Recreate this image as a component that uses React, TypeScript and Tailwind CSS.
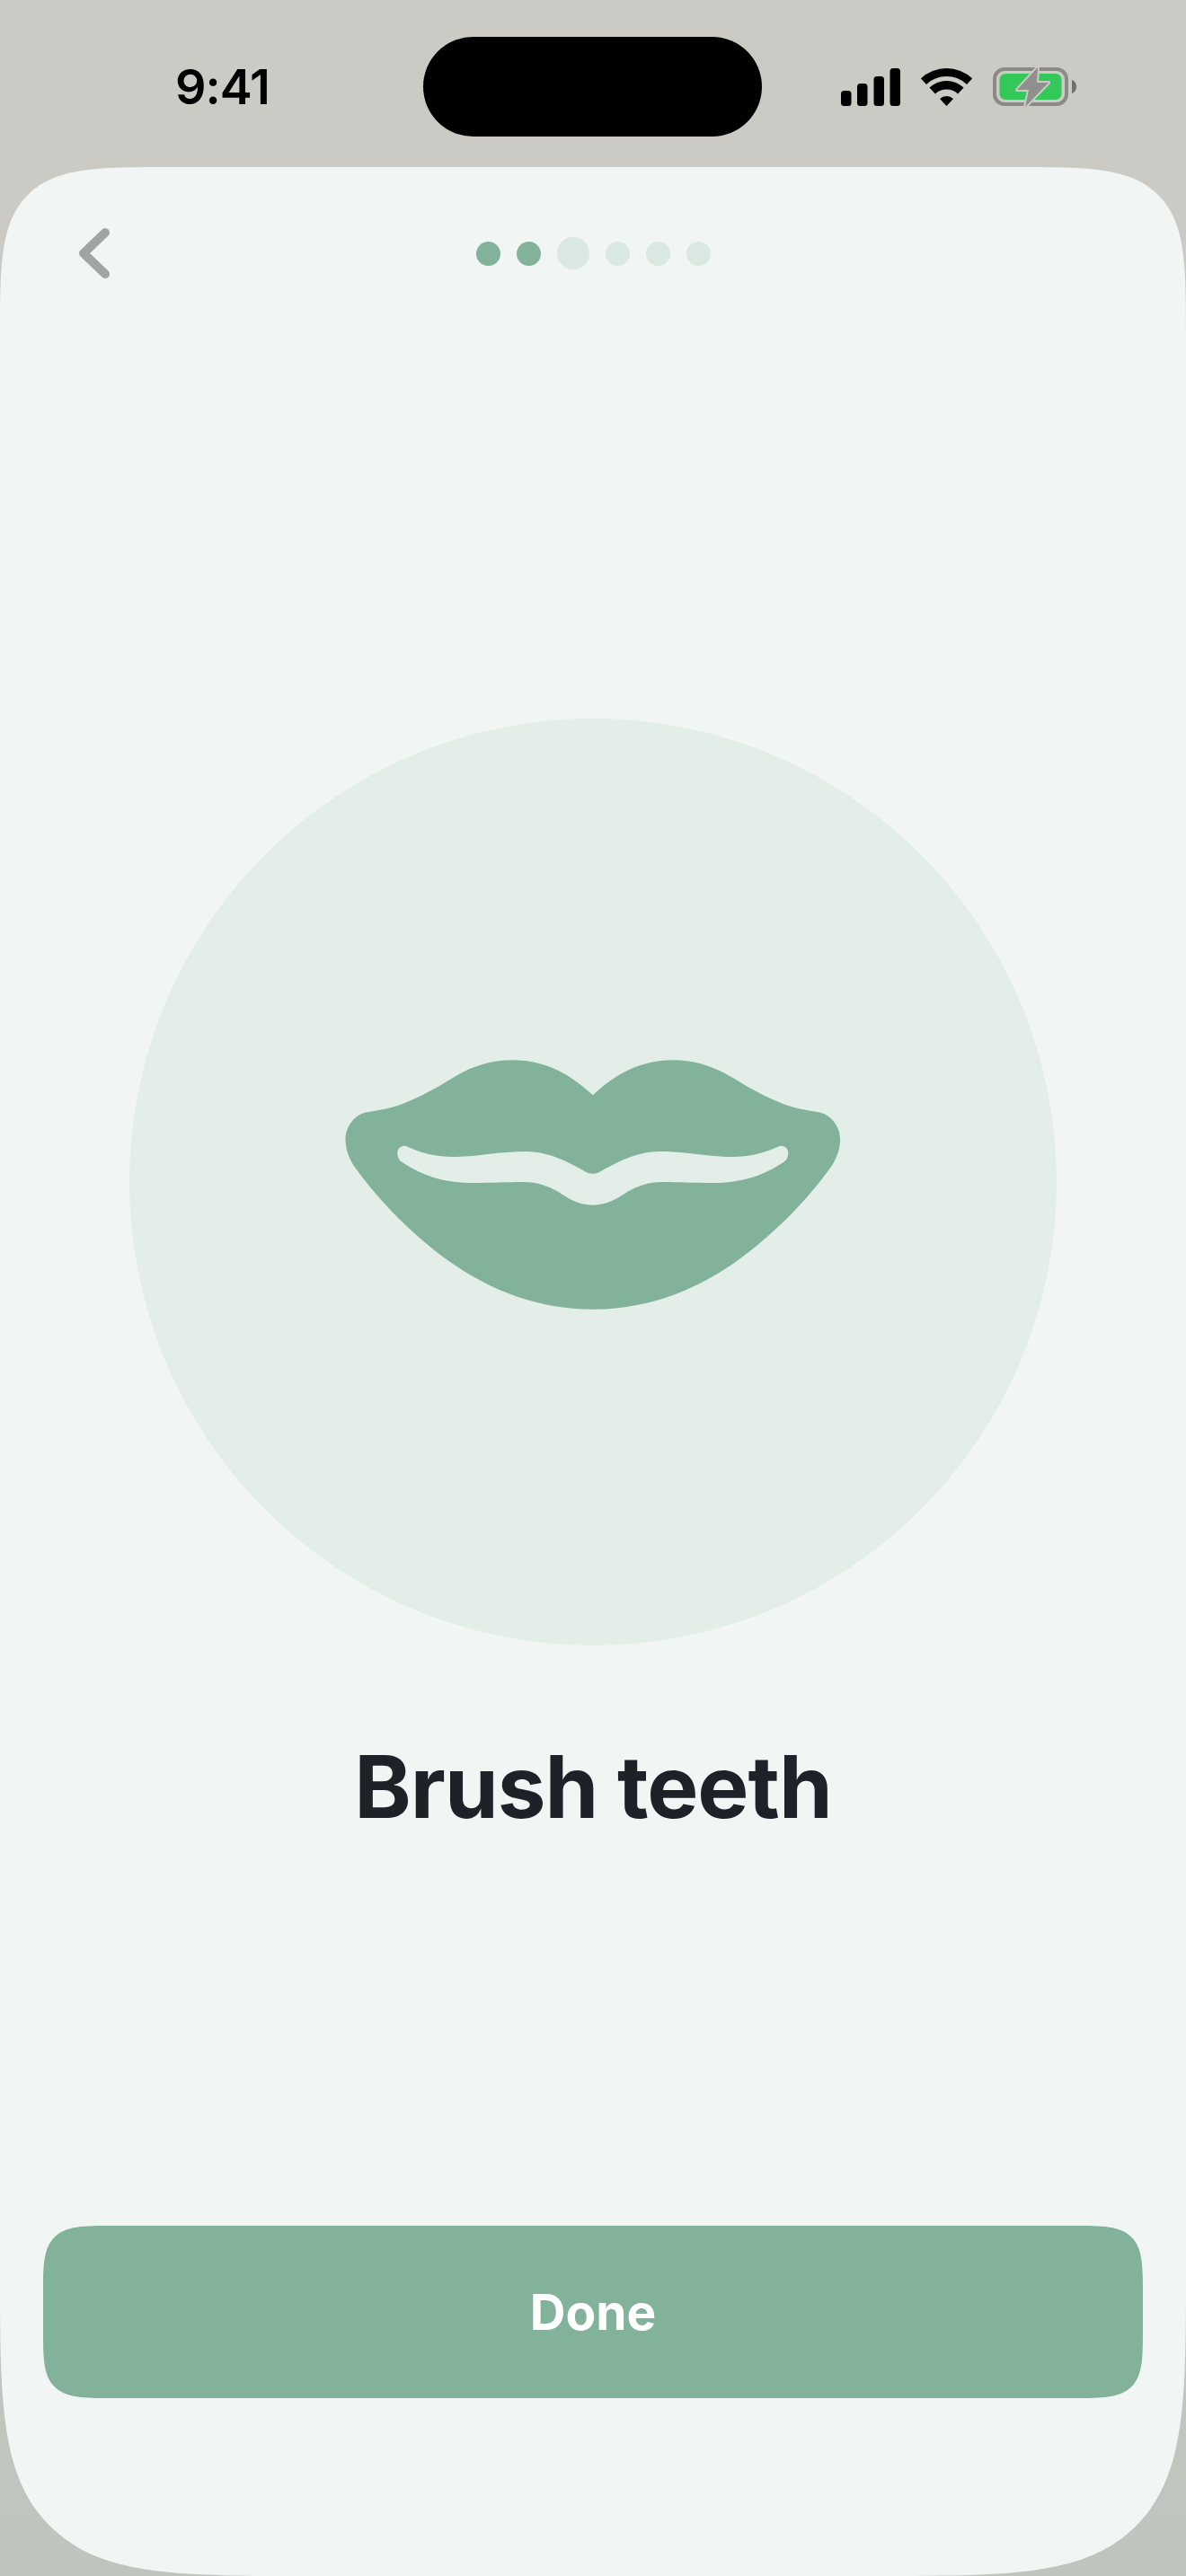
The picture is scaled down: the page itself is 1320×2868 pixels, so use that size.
const dots = [
  { id: 1, cls: "w-[27px] h-[27px] bg-[#83b29b]" },
  { id: 2, cls: "w-[27px] h-[27px] bg-[#83b29b]" },
  { id: 3, cls: "w-[36px] h-[36px] bg-[#d9e8e0]" },
  { id: 4, cls: "w-[27px] h-[27px] bg-[#d9e8e0]" },
  { id: 5, cls: "w-[27px] h-[27px] bg-[#d9e8e0]" },
  { id: 6, cls: "w-[27px] h-[27px] bg-[#d9e8e0]" },
];

const Signal = () => (
  <svg width="67" height="42" viewBox="0 0 67 42" fill="#000">
    <rect x="0" y="25" width="11.5" height="17" rx="3.5" />
    <rect x="18" y="17" width="11.5" height="25" rx="3.5" />
    <rect x="36.5" y="9" width="11.5" height="33" rx="3.5" />
    <rect x="54.5" y="0" width="11.5" height="42" rx="3.5" />
  </svg>
);

const Wifi = () => (
  <svg width="57" height="42" viewBox="0 0 57 42" fill="#000">
    <path d="M-.1 11.3A42 42 0 0 1 57.1 11.3L51 17.9A33 33 0 0 0 6 17.9Z" />
    <path d="M9.4 21.5A28 28 0 0 1 47.6 21.5L41.1 28.5A18.5 18.5 0 0 0 15.9 28.5Z" />
    <path d="M21 34A11 11 0 0 1 36 34L28.5 42Z" />
  </svg>
);

const Battery = () => (
  <svg width="93" height="46" viewBox="0 -1 93 46" fill="none">
    <rect x="2" y="2" width="80" height="39" rx="11" stroke="#8a8a87" strokeWidth="4" />
    <rect x="7.5" y="7" width="69" height="29" rx="6.5" fill="#34c85a" />
    <path d="M88 14C91 15 93 18 93 21.5C93 25 91 28 88 29Z" fill="#6f706e" />
    <path
      d="M50 0L27 25H40L36 44L62 17H49Z"
      fill="#8f908d"
      stroke="#cbcac5"
      strokeWidth="4"
      strokeLinejoin="round"
      paintOrder="stroke"
    />
  </svg>
);

const Lips = () => (
  <svg width="600" height="330" viewBox="0 0 600 330">
    <path
      fillRule="evenodd"
      fill="#83b29b"
      d="M299.8 68.3C283 53 255 29.3 210.5 29.3C178 29.3 156 41 134 55C118 65 100 73 88 78C75 83 62 85 50 87C35 89 24.5 103 24.5 118C24.5 130 30 142 36 150C62 186 100 225 141 254C182 283 235 306.7 299.8 306.7C364.6 306.7 417.6 283 458.6 254C499.6 225 537.6 186 563.6 150C569.6 142 575.1 130 575.1 118C575.1 103 564.6 89 549.6 87C537.6 85 524.6 83 511.6 78C499.6 73 481.6 65 465.6 55C443.6 41 421.6 29.3 389.1 29.3C344.6 29.3 316.6 53 299.8 68.3Z
      M92 125C86 124 82.3 128 82.3 133C82.3 137 84 140 86 141.7C105 155 130 166 165 166C190 166 205 165 222 165C240 165 250 170 260 175C272 183 283 190.7 299.8 190.7C316.6 190.7 327.6 183 339.6 175C349.6 170 359.6 165 377.6 165C394.6 165 409.6 166 434.6 166C469.6 166 494.6 155 513.6 141.7C515.6 140 517.3 137 517.3 133C517.3 128 513.6 124 507.6 125C490 133 475 137 454 137C430 137 405 131 374 131C345 131 320 147 305 155C301 156 298 156 294.6 155C279.6 147 254.6 131 225.6 131C194.6 131 169.6 137 145.6 137C124.6 137 109 133 92 125Z"
    />
  </svg>
);

export default function App() {
  return (
    <div className="flex h-[2868px] w-[1320px] flex-col overflow-hidden bg-gradient-to-b from-[#cbcac5] from-50% to-[#bfc5be] font-['Inter',sans-serif]">
      {/* status bar */}
      <div className="flex h-[186px] shrink-0 items-center pt-[7px]">
        <div className="w-[471px] pl-[195px] text-[54px] font-semibold leading-none tracking-[-1px] text-black">9:41</div>
        <div className="h-[111px] w-[377px] rounded-[56px] bg-black" />
        <div className="flex flex-1 items-center pl-[88px]">
          <Signal />
          <div className="ml-[22px]"><Wifi /></div>
          <div className="ml-[23px]"><Battery /></div>
        </div>
      </div>

      <div className="flex flex-1 flex-col items-center rounded-t-[195px] rounded-b-[350px] bg-[#f1f6f4] [corner-shape:squircle]">
        <div className="grid h-[192px] w-full shrink-0 grid-cols-[1fr_auto_1fr] items-center">
          <button className="pl-[87px]">
            <svg width="36" height="56" viewBox="0 0 36 56" fill="none" className="block">
              <path d="M30 5L6 28L30 51" stroke="#a0a4a2" strokeWidth="10" strokeLinecap="round" strokeLinejoin="round" />
            </svg>
          </button>
          <div className="flex items-center gap-[18px]">
            {dots.map((d) => (
              <span key={d.id} className={`rounded-full ${d.cls}`} />
            ))}
          </div>
          <div />
        </div>

        <div className="mt-[422px] flex h-[1032px] w-[1032px] shrink-0 items-center justify-center rounded-full bg-[#e4eee8]">
          <Lips />
        </div>

        <h1 className="mt-[99px] text-[96px] font-bold leading-[116px] tracking-[-1px] text-[#1e2228]">Brush teeth</h1>

        <button className="mb-[198px] mt-auto flex h-[192px] w-[1224px] items-center justify-center rounded-[80px] bg-[#83b29b] text-[55px] font-bold text-white [corner-shape:squircle]">
          Done
        </button>
      </div>
    </div>
  );
}
